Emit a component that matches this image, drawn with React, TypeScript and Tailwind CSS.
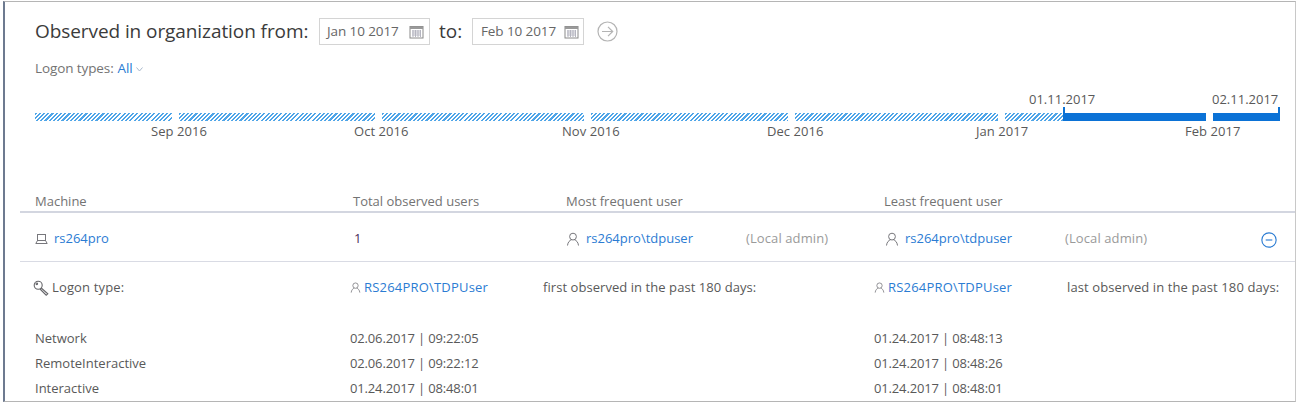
const hatch =
  "bg-[repeating-linear-gradient(135deg,#4fa5e8_0px,#4fa5e8_1.5px,#ffffff_1.5px,#ffffff_3px)]";

const segments = [
  { w: "w-[137px]" },
  { w: "w-[196px]" },
  { w: "w-[202px]" },
  { w: "w-[197px]" },
  { w: "w-[203px]" },
];

const logons = [
  { name: "Network", first: "02.06.2017 | 09:22:05", last: "01.24.2017 | 08:48:13" },
  { name: "RemoteInteractive", first: "02.06.2017 | 09:22:12", last: "01.24.2017 | 08:48:26" },
  { name: "Interactive", first: "01.24.2017 | 08:48:01", last: "01.24.2017 | 08:48:01" },
];

const CalendarIcon = () => (
  <svg width="15" height="14" viewBox="0 0 15 14" fill="none">
    <rect x="1" y="1.5" width="13" height="11.5" fill="#ffffff" stroke="#8a8a8a" />
    <rect x="1" y="1.5" width="13" height="2.5" fill="#9a9a9a" />
    <path d="M3 6h9M3 8h9M3 10h9M4 5v7M6.5 5v7M9 5v7M11.5 5v7" stroke="#b5b5c0" strokeWidth="1" />
  </svg>
);

const UserIcon = ({ size = 14 }: { size?: number }) => (
  <svg width={size} height={size} viewBox="0 0 14 14" fill="none" stroke="#77777c" strokeWidth="1">
    <circle cx="7" cy="4.6" r="3.4" />
    <path d="M1.5 13.5c.3-3.4 2.4-5.4 4-5.6M12.5 13.5c-.3-3.4-2.4-5.4-4-5.6" />
  </svg>
);

const LaptopIcon = () => (
  <svg width="13" height="11" viewBox="0 0 13 11" fill="none" stroke="#77777c" strokeWidth="1">
    <rect x="2.5" y="1.5" width="8" height="6" />
    <path d="M2.5 7.5 .8 10.5h11.4l-1.7-3" />
  </svg>
);

const KeyIcon = () => (
  <svg width="16" height="16" viewBox="0 0 16 16" fill="none" stroke="#66666a" strokeWidth="1.1">
    <circle cx="5.2" cy="5.2" r="4" />
    <path d="M8.2 8 14.8 13.8 13.2 15.2 7 9" />
    <circle cx="3.8" cy="3.8" r=".8" />
  </svg>
);

export default function App() {
  return (
    <div className="w-[1301px] h-[404px] bg-white overflow-hidden font-['Open_Sans',sans-serif] text-[#595959] pt-px pl-[3px] pr-[5px] pb-px">
      <div className="h-[401px] border-l-2 border-l-[#6d7a90] border-t border-t-[#b5b5b5] border-b border-b-[#b5b5b5] border-r border-r-[#c8c8c8] overflow-hidden">
        {/* top filter row */}
        <div className="flex items-center h-[31px] mt-[14px] pl-[30px] text-[#3b3b3b]">
          <span className="text-[19px] tracking-[-0.08px] w-[284px] whitespace-nowrap">Observed in organization from:</span>
          <div className="flex items-center justify-between w-[111px] h-[27px] border border-[#d4d4d4] pl-[7px] pr-[5px] text-[13.5px] tracking-[-0.1px] text-[#666666]">
            Jan 10 2017
            <CalendarIcon />
          </div>
          <span className="text-[19px] ml-[9px] w-[33px]">to:</span>
          <div className="flex items-center justify-between w-[112px] h-[27px] border border-[#d4d4d4] pl-[8px] pr-[4px] text-[13.5px] tracking-[-0.1px] text-[#666666]">
            Feb 10 2017
            <CalendarIcon />
          </div>
          <svg className="ml-[13px]" width="21" height="21" viewBox="0 0 21 21" fill="none" stroke="#b4b4b4" strokeWidth="1.2">
            <circle cx="10.5" cy="10.5" r="9.5" />
            <path d="M5 10.5h10.5M11 5.8l4.7 4.7-4.7 4.7" />
          </svg>
        </div>
        <div className="flex items-center h-[18px] mt-[12px] pl-[30px] text-[13.5px] tracking-[-0.1px] text-[#737373]">
          Logon types:
          <span className="ml-1 text-[#2b7cd3]">All</span>
          <svg className="ml-[3px] mt-[3px]" width="7" height="5" viewBox="0 0 7 5" fill="none" stroke="#a8b8cc">
            <path d="M.5.5 3.5 4l3-3.5" />
          </svg>
        </div>

        {/* timeline */}
        <div className="relative mt-[29px] h-[55px] pl-[30px]">
          <div className="flex h-[15px] items-end">
            {segments.map((s, i) => (
              <div key={i} className={`${s.w} h-[8px] mr-[7px] ${hatch}`}></div>
            ))}
            <div className={`w-[58px] h-[8px] ${hatch}`}></div>
            <div className="w-[143px] h-[14px] border-l-2 border-[#0b72d6] flex items-end">
              <div className="w-full h-[8px] bg-[#0b72d6]"></div>
            </div>
            <div className="w-[7px]"></div>
            <div className="w-[67px] h-[14px] border-r-2 border-[#0b72d6] flex items-end">
              <div className="w-full h-[8px] bg-[#0b72d6]"></div>
            </div>
          </div>
          <div className="absolute left-[1024px] -top-[16px] text-[13px] text-[#595959]">01.11.2017</div>
          <div className="absolute left-[1207px] -top-[16px] text-[13px] text-[#595959]">02.11.2017</div>
          <div className="flex mt-px text-[13px] tracking-[0.05px] text-[#595959] whitespace-nowrap">
            <span className="ml-[116px] w-[203px]">Sep 2016</span>
            <span className="w-[208px]">Oct 2016</span>
            <span className="w-[205px]">Nov 2016</span>
            <span className="w-[209px]">Dec 2016</span>
            <span className="w-[209px]">Jan 2017</span>
            <span>Feb 2017</span>
          </div>
        </div>

        {/* machines table */}
        <div className="mt-[30px] ml-[15px]">
          <div className="flex items-center h-[22px] pt-px pl-[15px] border-b-2 border-[#d3d6e0] text-[13px] text-[#737373]">
            <span className="w-[318px]">Machine</span>
            <span className="w-[213px]">Total observed users</span>
            <span className="w-[318px]">Most frequent user</span>
            <span>Least frequent user</span>
          </div>
          <div className="flex items-center h-[49px] pt-[3px] pl-[15px] border-b border-[#d9dbe4] text-[13px]">
            <span className="flex items-center w-[319px]">
              <LaptopIcon />
              <span className="ml-[6px] text-[#2b7cd3]">rs264pro</span>
            </span>
            <span className="w-[212px] text-[#4a2a5a]">1</span>
            <span className="flex items-center w-[180px]">
              <UserIcon />
              <span className="ml-[6px] text-[#2b7cd3]">rs264pro\tdpuser</span>
            </span>
            <span className="w-[139px] tracking-[0.1px] text-[#9a9a9a]">(Local admin)</span>
            <span className="flex items-center w-[180px]">
              <UserIcon />
              <span className="ml-[6px] text-[#2b7cd3]">rs264pro\tdpuser</span>
            </span>
            <span className="w-[196px] tracking-[0.1px] text-[#9a9a9a]">(Local admin)</span>
            <svg className="mt-[3px]" width="16" height="16" viewBox="0 0 17 17" fill="none" stroke="#2b7cd3" strokeWidth="1.2">
              <circle cx="8.5" cy="8.5" r="7.6" />
              <path d="M5 8.5h7" />
            </svg>
          </div>
          <div className="flex items-center h-[50px] pt-px pl-[13px] text-[13px] text-[#595959]">
            <span className="flex items-center w-[317px]">
              <KeyIcon />
              <span className="ml-[3px] tracking-[0.15px]">Logon type:</span>
            </span>
            <span className="flex items-center w-[193px]">
              <UserIcon size={11} />
              <span className="ml-[3px] text-[#2b7cd3] tracking-[0.2px]">RS264PRO\TDPUser</span>
            </span>
            <span className="w-[331px] tracking-[0.06px]">first observed in the past 180 days:</span>
            <span className="flex items-center w-[193px]">
              <UserIcon size={11} />
              <span className="ml-[3px] text-[#2b7cd3] tracking-[0.2px]">RS264PRO\TDPUser</span>
            </span>
            <span className="whitespace-nowrap tracking-[0.1px]">last observed in the past 180 days:</span>
          </div>
          <div className="pt-[14px]">
            {logons.map((l) => (
              <div key={l.name} className="flex items-center h-[25px] pl-[15px] text-[13px] text-[#595959]">
                <span className="w-[315px]">{l.name}</span>
                <span className="w-[524px] tracking-[-0.15px]">{l.first}</span>
                <span className="tracking-[-0.15px]">{l.last}</span>
              </div>
            ))}
          </div>
        </div>
      </div>
    </div>
  );
}
